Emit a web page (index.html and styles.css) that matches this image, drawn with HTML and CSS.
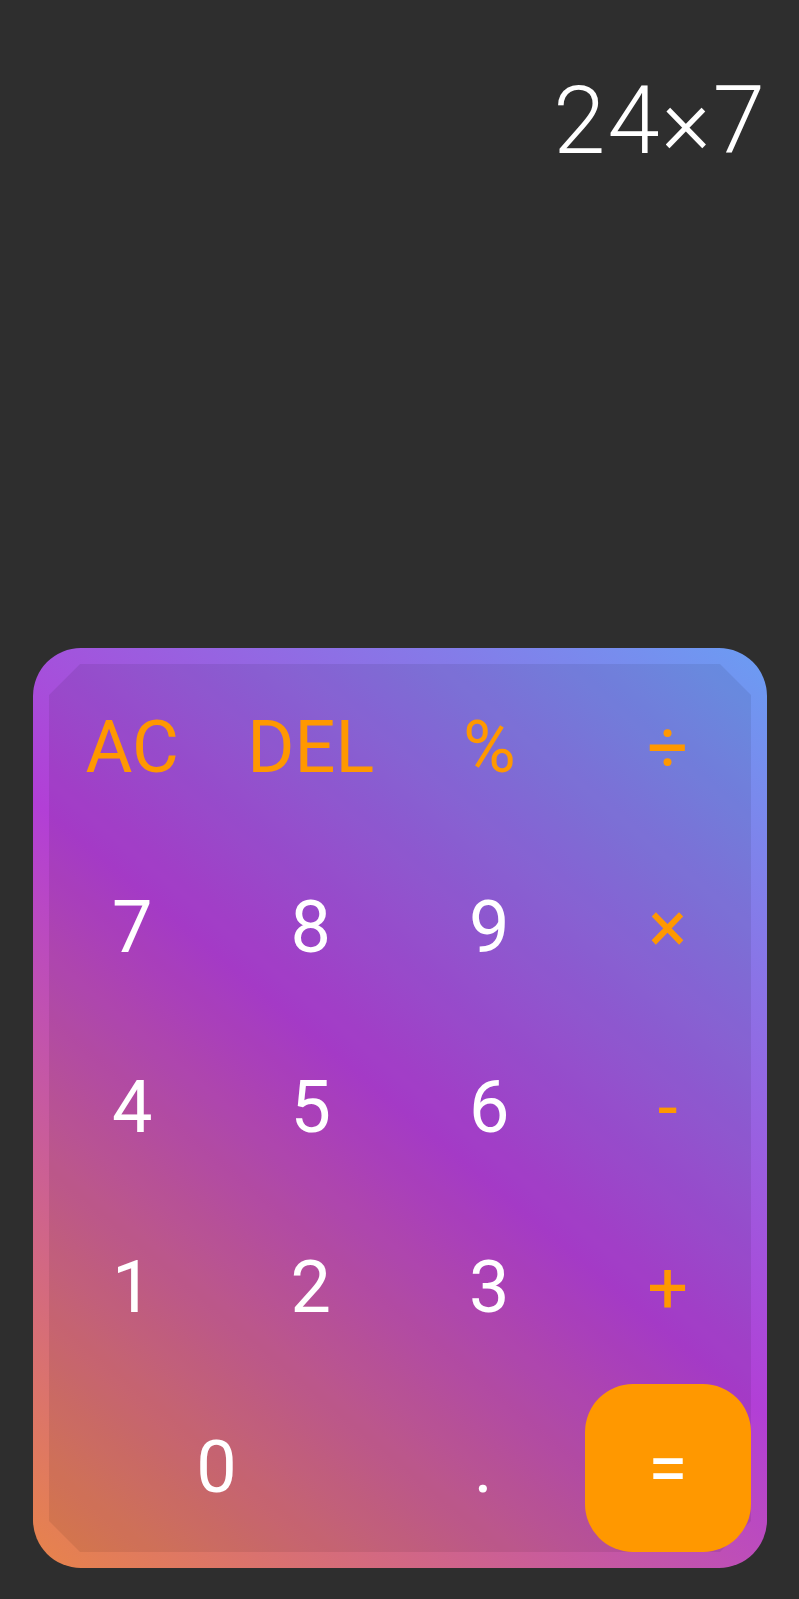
FILE: index.html
```html
<!DOCTYPE html>
<html lang="en">
<head>
<meta charset="utf-8">
<title>Calculator</title>
<link rel="stylesheet" href="styles.css">
</head>
<body>
<div class="app">
  <div class="display">
    <div class="expr">24×7</div>
  </div>
  <div class="pad">
    <div class="keys">
      <div class="key op">AC</div>
      <div class="key op">DEL</div>
      <div class="key op">%</div>
      <div class="key op">÷</div>
      <div class="key">7</div>
      <div class="key">8</div>
      <div class="key">9</div>
      <div class="key op">×</div>
      <div class="key">4</div>
      <div class="key">5</div>
      <div class="key">6</div>
      <div class="key op">-</div>
      <div class="key">1</div>
      <div class="key">2</div>
      <div class="key">3</div>
      <div class="key op">+</div>
      <div class="key zero">0</div>
      <div class="key dot">.</div>
      <div class="key equals">=</div>
    </div>
  </div>
</div>
</body>
</html>
```
FILE: styles.css
```css
html, body {
  margin: 0;
  padding: 0;
  background: #2e2e2e;
}

body {
  font-family: "Roboto", "Liberation Sans", sans-serif;
}

.app {
  height: 100vh;
  display: flex;
  flex-direction: column;
}

.display {
  flex: 1;
  padding: 66px 32px 0 32px;
}

.expr {
  text-align: right;
  color: #ffffff;
  font-size: 94px;
  font-weight: 300;
  letter-spacing: 2px;
  line-height: normal;
}

.pad {
  position: relative;
  margin: 0 32px 31px 33px;
  padding: 16px;
  border-radius: 48px;
  background: linear-gradient(40deg, #e8844a 0%, #b23fd6 50%, #6b9df3 100%);
}

.pad::before {
  content: "";
  position: absolute;
  top: 16px;
  left: 16px;
  right: 16px;
  bottom: 16px;
  background: rgba(0, 0, 0, 0.075);
  clip-path: polygon(31px 0, calc(100% - 31px) 0, 100% 31px, 100% calc(100% - 31px), calc(100% - 31px) 100%, 31px 100%, 0 calc(100% - 31px), 0 31px);
}

.keys {
  position: relative;
  display: grid;
  grid-template-columns: repeat(4, 1fr);
  grid-template-rows: repeat(5, 168px);
  gap: 12px;
}

.key {
  display: flex;
  align-items: center;
  justify-content: center;
  padding-bottom: 2px;
  color: #ffffff;
  font-size: 72px;
  font-weight: 400;
}

.key.op {
  color: #ff9800;
}

.key.zero {
  grid-column: span 2;
  padding-right: 10px;
}

.key.dot {
  padding-right: 12px;
}

.key.equals {
  grid-column: 4;
  padding-bottom: 0;
  background: #ff9800;
  border-radius: 48px;
}
```
